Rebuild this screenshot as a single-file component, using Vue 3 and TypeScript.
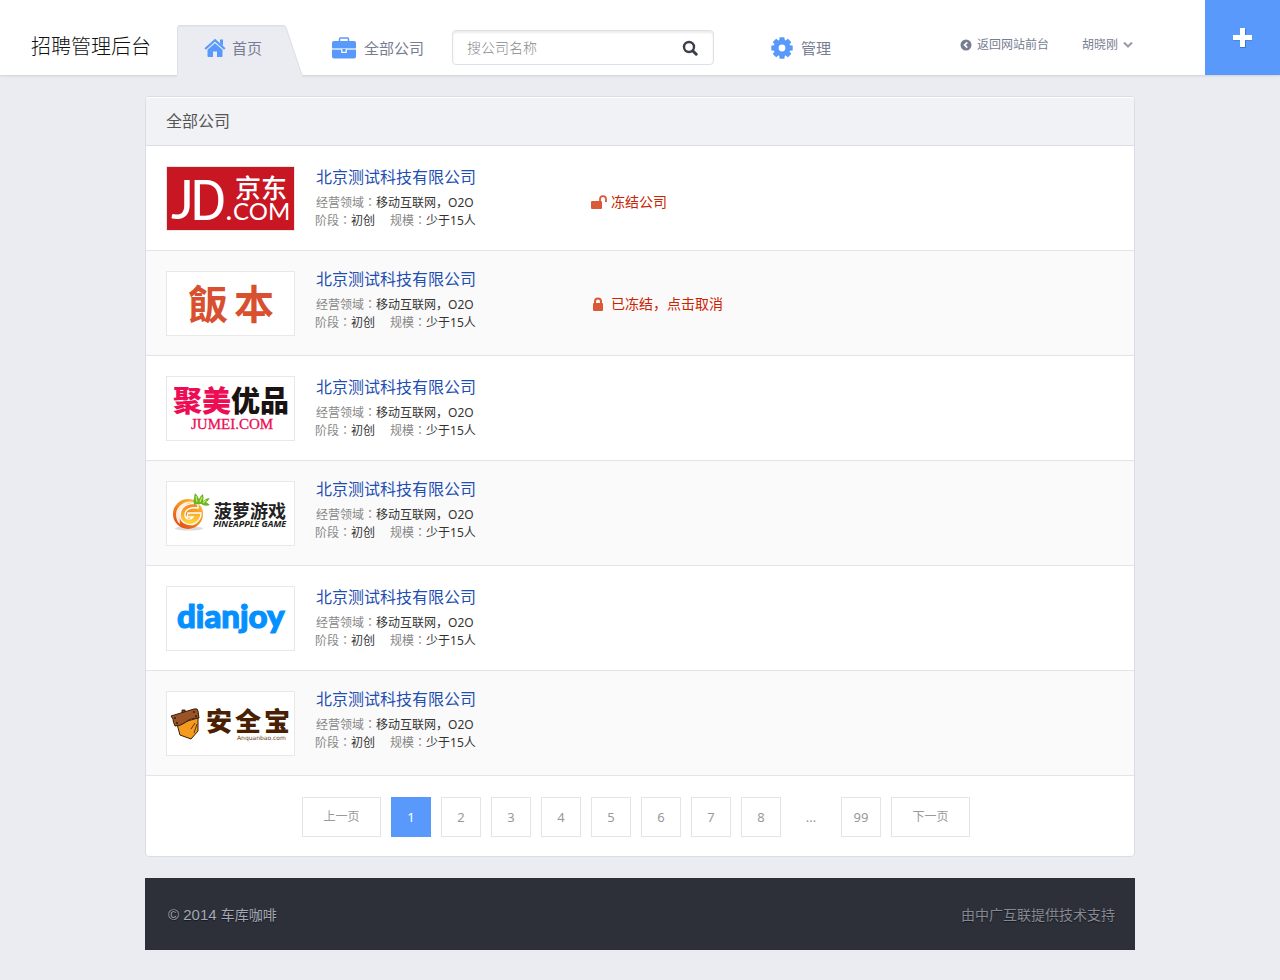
<script setup lang="ts">
import { ref } from 'vue'

type LogoKind = 'jd' | 'fanben' | 'jumei' | 'pineapple' | 'dianjoy' | 'anquanbao'

interface Company {
  id: number
  logo: LogoKind
  alt: string
  name: string
  field: string
  stage: string
  size: string
  action?: 'freeze' | 'frozen'
}

const base = { name: '北京测试科技有限公司', field: '移动互联网，O2O', stage: '初创', size: '少于15人' }

const companies: Company[] = [
  { id: 1, logo: 'jd', alt: '京东', ...base, action: 'freeze' },
  { id: 2, logo: 'fanben', alt: '飯本', ...base, action: 'frozen' },
  { id: 3, logo: 'jumei', alt: '聚美优品', ...base },
  { id: 4, logo: 'pineapple', alt: '菠萝游戏', ...base },
  { id: 5, logo: 'dianjoy', alt: 'dianjoy', ...base },
  { id: 6, logo: 'anquanbao', alt: '安全宝', ...base },
]

const pages: (number | null)[] = [1, 2, 3, 4, 5, 6, 7, 8, null, 99]
const current = ref(1)
const keyword = ref('')
const teeth = [0, 45, 90, 135, 180, 225, 270, 315]
</script>

<template>
  <div class="page">
    <header class="topbar">
      <h1 class="brand">招聘管理后台</h1>
      <nav class="nav">
        <a class="nav-item tab" href="#">
          <svg class="tab-shape" viewBox="0 0 126 53" width="126" height="53" aria-hidden="true">
            <path d="M0 53V3Q0 0 3 0H106Q108 0 109 2L125 50V53Z" fill="#ebecf1" />
            <path d="M.5 50V3Q.5 .5 3 .5H106Q108 .5 109 2.500L125 50" fill="none" stroke="#dddfe6" />
            <path d="M2 1.500H107" stroke="#e4e5eb" />
          </svg>
          <svg class="icon" width="22" height="20" viewBox="0 0 22 20" aria-hidden="true">
            <path d="M1.200 11 11 2.300 20.800 11" fill="none" stroke="#5999fb" stroke-width="2.200" />
            <path d="M16 1.500h3v6.500l-3-2.700z" fill="#5999fb" />
            <path d="M11 5.200 18.500 11.800V18a1 1 0 0 1-1 1H13v-5.500H9V19H4.500a1 1 0 0 1-1-1v-6.200z" fill="#5999fb" />
          </svg>
          <span>首页</span>
        </a>
        <a class="nav-item all" href="#">
          <svg class="icon" width="24" height="22" viewBox="0 0 24 22" aria-hidden="true">
            <path d="M7.500 4.500V2q0-1 1-1h7q1 0 1 1v2.500" fill="none" stroke="#5999fb" stroke-width="1.500" />
            <path d="M2 4h20q2 0 2 2v5H0V6q0-2 2-2z" fill="#5999fb" />
            <path d="M0 11h24v2H0z" fill="#bcd6fd" />
            <path d="M0 13h24v6.500q0 2-2 2H2q-2 0-2-2z" fill="#5999fb" />
            <path d="M9.800 12v3.300h4.400V12" fill="#5999fb" stroke="#fff" stroke-width="1.200" />
          </svg>
          <span>全部公司</span>
        </a>
      </nav>
      <form class="search" role="search" @submit.prevent>
        <input v-model="keyword" type="search" placeholder="搜公司名称" aria-label="搜公司名称" />
        <button type="submit" aria-label="搜索">
          <svg width="16" height="16" viewBox="0 0 16 16" aria-hidden="true">
            <circle cx="7" cy="7" r="5" fill="none" stroke="#3a3f4a" stroke-width="2.400" />
            <path d="m10.700 10.700 3.500 3.500" stroke="#3a3f4a" stroke-width="3" stroke-linecap="round" />
          </svg>
        </button>
      </form>
      <a class="nav-item manage" href="#">
        <svg class="icon" width="22" height="22" viewBox="0 0 22 22" aria-hidden="true">
          <g fill="#5999fb">
            <path v-for="t in teeth" :key="t" d="M8.500.8q0-.5.5-.5h4q.5 0 .5.500L14 5H8z" :transform="`rotate(${t} 11 11)`" />
            <circle cx="11" cy="11" r="8.300" />
          </g>
          <circle cx="11" cy="11" r="3.400" fill="#fff" />
        </svg>
        <span>管理</span>
      </a>
      <div class="account">
        <a class="back" href="#">
          <svg width="12" height="12" viewBox="0 0 12 12" aria-hidden="true">
            <circle cx="6" cy="6" r="5.500" fill="#777d92" />
            <path d="M7.300 3.300 4.600 6l2.700 2.700" fill="none" stroke="#fff" stroke-width="1.700" />
          </svg>
          <span>返回网站前台</span>
        </a>
        <button class="user" type="button" aria-haspopup="menu">
          <span>胡晓刚</span>
          <svg width="10" height="8" viewBox="0 0 10 8" aria-hidden="true">
            <path d="m1 1.500 4 4 4-4" fill="none" stroke="#9b9fa9" stroke-width="2.200" />
          </svg>
        </button>
      </div>
      <button class="add" type="button" aria-label="新增">
        <svg width="20" height="20" viewBox="0 0 20 20" aria-hidden="true">
          <path d="M7 1h6v6.500h6v5h-6V20H7v-7.500H0v-5h7z" fill="#3d76cf" />
          <path d="M7 0h5v7h7v5h-7v7H7v-7H0V7h7z" fill="#fff" />
        </svg>
      </button>
    </header>

    <main class="content">
      <section class="panel">
        <h2 class="panel-title">全部公司</h2>
        <ul class="list">
          <li v-for="c in companies" :key="c.id" class="row">
            <a class="logo" href="#" :aria-label="c.alt">
              <svg v-if="c.logo === 'jd'" viewBox="0 0 129 65">
                <rect x="1" y="1" width="127" height="63" fill="#c81623" />
                <g fill="#fff" font-family="Lato, sans-serif">
                  <text x="5" y="53" font-size="55">J</text>
                  <text x="24" y="54" font-size="56" font-family="Roboto, sans-serif">D</text>
                  <text x="60" y="54" font-size="24" font-weight="700">.</text>
                  <text x="67" y="54" font-size="24">COM</text>
                  <text x="69" y="32" font-size="26" font-weight="500" font-family="'Noto Sans CJK SC', sans-serif">京东</text>
                </g>
              </svg>
              <svg v-else-if="c.logo === 'fanben'" viewBox="0 0 129 65">
                <g fill="#d8502f" font-size="40" font-weight="700" font-family="'Noto Sans CJK TC', sans-serif">
                  <text x="22" y="48">飯</text>
                  <text x="68" y="48">本</text>
                </g>
              </svg>
              <svg v-else-if="c.logo === 'jumei'" viewBox="0 0 129 65">
                <g font-size="29" font-weight="900" font-family="'Noto Sans CJK SC', sans-serif">
                  <text x="7" y="36" fill="#ed0d55">聚美</text>
                  <text x="65" y="36" fill="#1a1311">优品</text>
                </g>
                <text x="25" y="53" font-size="15" fill="#ed0d55" stroke="#ed0d55" stroke-width=".3" font-family="'Liberation Serif', serif">JUMEI.COM</text>
              </svg>
              <svg v-else-if="c.logo === 'pineapple'" viewBox="0 0 129 65">
                <defs>
                  <linearGradient id="pine" x1="1" y1="0" x2="0.200" y2="1">
                    <stop offset="0" stop-color="#fdc63a" />
                    <stop offset=".55" stop-color="#f58a1b" />
                    <stop offset="1" stop-color="#e2471a" />
                  </linearGradient>
                  <linearGradient id="pineG" x1="0" y1="0" x2="0" y2="1">
                    <stop offset="0" stop-color="#f58220" />
                    <stop offset="1" stop-color="#ffdc3c" />
                  </linearGradient>
                </defs>
                <ellipse cx="23" cy="47.500" rx="14" ry="2" fill="#dcdcdc" />
                <circle cx="22" cy="33" r="15" fill="url(#pine)" />
                <path d="M34 25C27 16 11 21 10 33c0 4 1 8 4 10-1-9 1-18 9-21 4-1 8 0 11 3z" fill="#fff" fill-opacity=".85" />
                <path d="M32 24c-9-4-18 2-18 10 0 9 12 13 18 6 2-2 3-5 3-8H22l-1 4h6c-3 4-8 2-8-2 0-6 6-8 13-7z" fill="url(#pineG)" stroke="#fff" stroke-width="1.300" />
                <path d="M28 24q-1-5 1-12 3 3 4 6 1-3 4-5 1 4 0 7 3-3 7-3-2 3-4 4l4 3q-5 2-9-1-4 0-7 1z" fill="#67b52f" />
                <path d="m30 15 1 6m5-5-2 5m6-2-3 3" fill="none" stroke="#dbe84a" stroke-width="1.200" />
                <g fill="#222">
                  <text x="48" y="37" font-size="18" font-weight="700" font-family="'Noto Sans CJK SC', sans-serif">菠萝游戏</text>
                  <text x="47" y="46" font-size="9" font-weight="700" font-style="italic" font-family="'Open Sans', sans-serif">PINEAPPLE GAME</text>
                </g>
              </svg>
              <svg v-else-if="c.logo === 'dianjoy'" viewBox="0 0 129 65">
                <text x="11" y="42" font-size="33" font-weight="900" fill="#0590ff" stroke="#0590ff" stroke-width="1.200" font-family="Lato, sans-serif">dianjoy</text>
              </svg>
              <svg v-else viewBox="0 0 129 65">
                <g stroke="#3a1a08" stroke-linejoin="round">
                  <path d="m11 33 3 11 11 4 7-8V27z" fill="#f39a1f" />
                  <path d="m16 19 3 0 1 4h-4z" fill="#8a4a20" />
                  <path d="m5 25 23-7q4-1 4 2l1 7q-9 0-13 4-5 4-11 4-2-4-2-7z" fill="#9a5527" />
                </g>
                <path d="m31 33-3 9m1-10-4 6" stroke="#3a1a08" stroke-width=".8" />
                <g fill="#3a1a08">
                  <circle cx="9" cy="27" r="1" /><circle cx="11" cy="32" r="1" />
                  <circle cx="28" cy="21" r="1" /><circle cx="30" cy="25" r="1" />
                </g>
                <g fill="#4a1f04" font-size="26" font-weight="900" font-family="'Noto Sans CJK SC', sans-serif">
                  <text x="40" y="40">安</text>
                  <text x="69" y="40">全</text>
                  <text x="98" y="40">宝</text>
                </g>
                <text x="71" y="49" font-size="6" fill="#6b3a14" font-family="'DejaVu Sans', sans-serif">Anquanbao.com</text>
              </svg>
            </a>
            <div class="info">
              <h3><a href="#">{{ c.name }}</a></h3>
              <p><span class="label">经营领域<i>：</i></span>{{ c.field }}</p>
              <p class="pair">
                <span><span class="label">阶段<i>：</i></span>{{ c.stage }}</span>
                <span><span class="label">规模<i>：</i></span>{{ c.size }}</span>
              </p>
            </div>
            <button v-if="c.action === 'freeze'" class="action" type="button">
              <svg width="16" height="14" viewBox="0 0 16 14" aria-hidden="true">
                <rect x="0" y="6" width="11" height="8" rx="1" fill="#da5939" />
                <path d="M9 6.500V4.200a3 3 0 0 1 6 0V7" fill="none" stroke="#da5939" stroke-width="1.800" />
              </svg>
              <span>冻结公司</span>
            </button>
            <button v-else-if="c.action === 'frozen'" class="action" type="button">
              <svg width="16" height="14" viewBox="0 0 16 14" aria-hidden="true">
                <rect x="2" y="6" width="10" height="8" rx="1" fill="#da5939" />
                <path d="M4 6.500V4.500a3 3 0 0 1 6 0v2" fill="none" stroke="#da5939" stroke-width="2" />
              </svg>
              <span>已冻结，点击取消</span>
            </button>
          </li>
        </ul>
        <nav class="pager" aria-label="分页">
          <button class="wide" type="button">上一页</button>
          <template v-for="(p, i) in pages" :key="i">
            <button v-if="p !== null" type="button" :class="{ on: p === current }" @click="current = p">{{ p }}</button>
            <span v-else class="dots">...</span>
          </template>
          <button class="wide" type="button">下一页</button>
        </nav>
      </section>

      <footer class="footer">
        <span><span class="copy">© 2014 </span>车库咖啡</span>
        <span class="support">由中广互联提供技术支持</span>
      </footer>
    </main>
  </div>
</template>

<style>
body {
  background: #ebecf1;
}
</style>

<style scoped>
* {
  box-sizing: border-box;
}
.page {
  font-family: "Noto Sans", "Noto Sans CJK SC", sans-serif;
  font-size: 12px;
  line-height: 18px;
  color: #333;
  padding-bottom: 30px;
}
h1, h2, h3, p, ul {
  margin: 0;
  padding: 0;
}
a {
  color: inherit;
  text-decoration: none;
}
button {
  font: inherit;
  color: inherit;
  background: none;
  border: 0;
  padding: 0;
  cursor: pointer;
}
svg {
  display: block;
  flex: none;
}
.topbar {
  display: flex;
  height: 75px;
  background: #fff;
  box-shadow: 0 1px 2px rgba(60, 70, 100, 0.16);
  white-space: nowrap;
}
.brand {
  width: 177px;
  padding: 18px 0 0 31px;
  font-size: 20px;
  line-height: 57px;
  font-weight: 300;
  color: #111;
}
.nav {
  display: flex;
}
.nav-item {
  position: relative;
  display: flex;
  align-items: center;
  gap: 8px;
  padding-top: 20px;
  font-size: 15px;
  color: #777d92;
}
.icon {
  position: relative;
}
.nav-item span {
  position: relative;
}
.tab {
  width: 125px;
  padding-left: 27px;
  gap: 6px;
}
.tab-shape {
  position: absolute;
  left: 0;
  top: 25px;
}
.all {
  margin-left: 30px;
}
.search {
  display: flex;
  width: 262px;
  height: 35px;
  margin: 30px 0 0 28px;
  border: 1px solid #dfe0e6;
  border-radius: 4px;
  box-shadow: inset 0 2px 2px rgba(60, 70, 90, 0.1);
}
.search input {
  flex: 1;
  min-width: 0;
  border: 0;
  padding: 0 0 0 14px;
  background: none;
  font: inherit;
  font-size: 14px;
  font-weight: 300;
  color: #333;
  outline: none;
}
.search input::placeholder {
  color: #888;
}
.search button {
  width: 46px;
  display: grid;
  place-items: center;
}
.manage {
  margin-left: 57px;
}
.account {
  display: flex;
  align-items: center;
  gap: 33px;
  margin-left: auto;
  padding: 15px 72px 0 0;
  color: #777d92;
}
.back,
.user {
  display: flex;
  align-items: center;
  gap: 5px;
}
.add {
  display: grid;
  place-items: center;
  width: 75px;
  background: #5999fb;
}
.content {
  max-width: 990px;
  margin: 21px auto 0;
}
.panel {
  background: #fff;
  border: 1px solid #dadde3;
  border-radius: 4px;
}
.panel-title {
  height: 49px;
  padding-left: 20px;
  line-height: 48px;
  font-size: 16px;
  font-weight: 400;
  color: #555;
  background: #f1f2f6;
  border-bottom: 1px solid #dadde3;
  border-radius: 3px 3px 0 0;
  box-shadow: inset 0 1px 0 #fff;
}
.list {
  list-style: none;
}
.row {
  display: flex;
  align-items: flex-start;
  padding: 20px 20px 19px;
  border-bottom: 1px solid #e4e4e4;
}
.row:nth-child(even) {
  background: #fafafa;
}
.logo {
  flex: none;
  width: 129px;
  height: 65px;
  background: #fff;
  box-shadow: inset 0 0 0 1px #e8e8e8;
}
.info {
  width: 296px;
  padding-left: 20px;
}
.info h3 {
  padding-left: 1px;
  margin-bottom: 6px;
  font-size: 16px;
  line-height: 22px;
  font-weight: 400;
  color: #1f4fb2;
}
.info p {
  padding-left: 1px;
}
.label {
  color: #888;
}
.label i {
  font-family: "Noto Sans CJK TC", sans-serif;
  font-style: normal;
  line-height: 12px;
}
.info .pair {
  display: flex;
  gap: 15px;
  padding-left: 0;
}
.action {
  display: flex;
  align-items: center;
  gap: 4px;
  margin-top: 26px;
  font-size: 14px;
  line-height: 20px;
  color: #cc2200;
}
.row:nth-child(even) .info {
  margin-top: -3px;
}
.row:nth-child(even) .action {
  margin-top: 23px;
}
.pager {
  display: flex;
  justify-content: center;
  gap: 10px;
  padding: 21px 8px 19px 0;
  color: #999;
}
.pager button,
.dots {
  display: grid;
  place-items: center;
  width: 40px;
  height: 40px;
  font-size: 13px;
}
.pager button {
  border: 1px solid #e4e4e4;
}
.pager .wide {
  width: 79px;
  font-size: 12px;
}
.pager .on {
  color: #fff;
  background: #5999fb;
  border-color: #5999fb;
}
.footer {
  display: flex;
  justify-content: space-between;
  align-items: center;
  height: 72px;
  margin-top: 21px;
  padding: 2px 20px 0 23px;
  font-size: 14px;
  color: #a3a9b8;
  background: #2e3039;
  text-shadow: 0 1px 1px rgba(0, 0, 0, 0.5);
}
.copy {
  font-family: "Liberation Sans", sans-serif;
  font-size: 15px;
}
.support {
  color: #858994;
}
</style>
